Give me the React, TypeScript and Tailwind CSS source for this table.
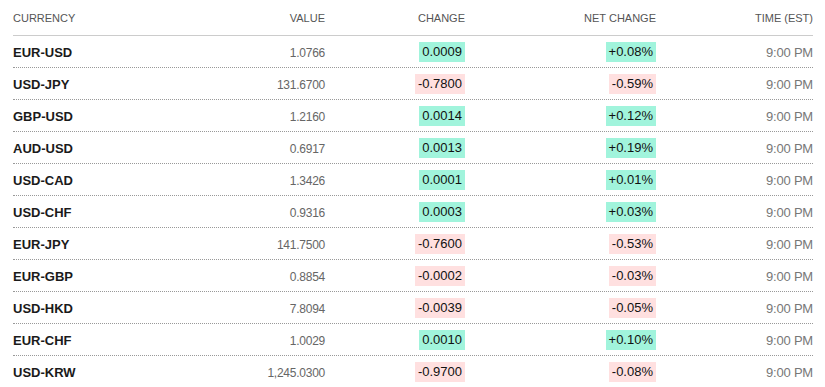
import React from "react";

type Row = { pair: string; value: string; change: string; net: string };

const rows: Row[] = [
  { pair: "EUR-USD", value: "1.0766", change: "0.0009", net: "+0.08%" },
  { pair: "USD-JPY", value: "131.6700", change: "-0.7800", net: "-0.59%" },
  { pair: "GBP-USD", value: "1.2160", change: "0.0014", net: "+0.12%" },
  { pair: "AUD-USD", value: "0.6917", change: "0.0013", net: "+0.19%" },
  { pair: "USD-CAD", value: "1.3426", change: "0.0001", net: "+0.01%" },
  { pair: "USD-CHF", value: "0.9316", change: "0.0003", net: "+0.03%" },
  { pair: "EUR-JPY", value: "141.7500", change: "-0.7600", net: "-0.53%" },
  { pair: "EUR-GBP", value: "0.8854", change: "-0.0002", net: "-0.03%" },
  { pair: "USD-HKD", value: "7.8094", change: "-0.0039", net: "-0.05%" },
  { pair: "EUR-CHF", value: "1.0029", change: "0.0010", net: "+0.10%" },
  { pair: "USD-KRW", value: "1,245.0300", change: "-0.9700", net: "-0.08%" },
];

function Badge({ text }: { text: string }) {
  const neg = text.startsWith("-");
  return (
    <span
      className={
        "inline-flex h-[20px] items-center px-[3px] text-[13px] leading-none text-[#111] " +
        (neg ? "bg-[#ffe0e0]" : "bg-[#a1f4dc]")
      }
    >
      {text}
    </span>
  );
}

const cols = "grid grid-cols-[152px_160px_140px_191px_157px]";

export default function App() {
  return (
    <div
      className="bg-white pl-[13px] pr-[12px]"
      style={{ fontFamily: '"Liberation Sans", Arial, sans-serif' }}
    >
      <div
        className={
          cols +
          " h-[36px] border-b border-[#cccccc] pt-[12px] text-[11px] leading-[13px] text-[#555]"
        }
      >
        <div>CURRENCY</div>
        <div className="text-right">VALUE</div>
        <div className="text-right">CHANGE</div>
        <div className="text-right">NET CHANGE</div>
        <div className="text-right">TIME (EST)</div>
      </div>
      {rows.map((r) => (
        <div
          key={r.pair}
          className={
            cols + " h-[32px] items-center border-b border-dotted border-[#999]"
          }
        >
          <div className="pt-[2px] text-[13px] font-bold text-[#1a1a1a]">{r.pair}</div>
          <div className="pt-[2px] text-right text-[12px] tracking-[-0.25px] text-[#666]">
            {r.value}
          </div>
          <div className="flex justify-end">
            <Badge text={r.change} />
          </div>
          <div className="flex justify-end">
            <Badge text={r.net} />
          </div>
          <div className="pt-[2px] text-right text-[13px] tracking-[-0.2px] text-[#777]">
            9:00 PM
          </div>
        </div>
      ))}
    </div>
  );
}
